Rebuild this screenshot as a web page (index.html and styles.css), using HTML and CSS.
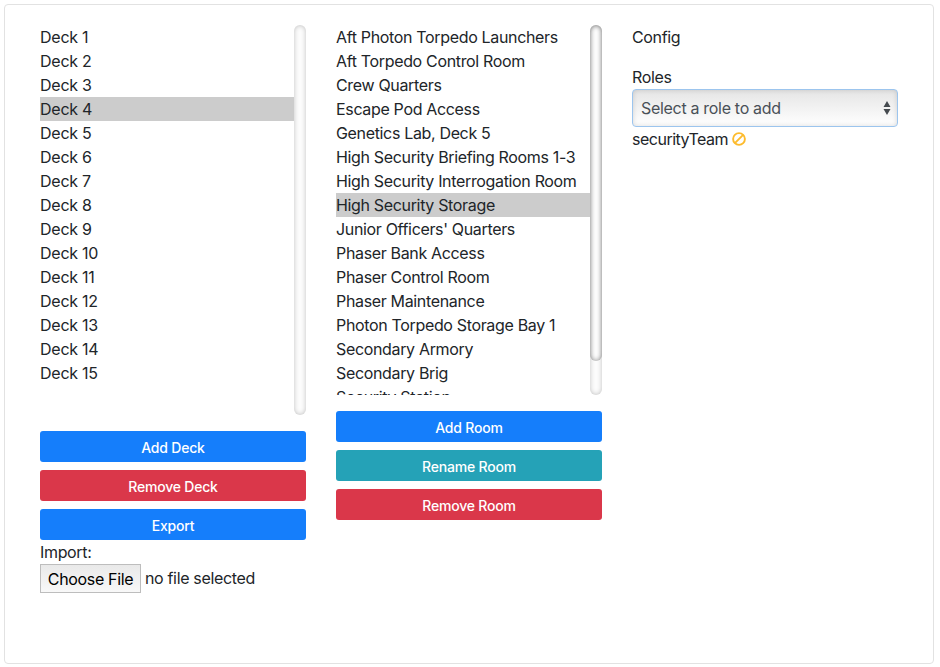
FILE: index.html
```html
<!DOCTYPE html>
<html lang="en">
<head>
<meta charset="utf-8">
<title>Decks and Rooms</title>
<link rel="stylesheet" href="styles.css">
</head>
<body>
<main class="card">
  <section class="column">
    <div class="scroller decks">
      <ul class="list">
        <li>Deck 1</li>
        <li>Deck 2</li>
        <li>Deck 3</li>
        <li class="selected">Deck 4</li>
        <li>Deck 5</li>
        <li>Deck 6</li>
        <li>Deck 7</li>
        <li>Deck 8</li>
        <li>Deck 9</li>
        <li>Deck 10</li>
        <li>Deck 11</li>
        <li>Deck 12</li>
        <li>Deck 13</li>
        <li>Deck 14</li>
        <li>Deck 15</li>
      </ul>
      <div class="track"></div>
    </div>
    <div class="buttons">
      <button class="btn primary">Add Deck</button>
      <button class="btn danger">Remove Deck</button>
      <button class="btn primary">Export</button>
    </div>
    <div class="import-label">Import:</div>
    <div class="file"><button class="choose">Choose File</button><span>no file selected</span></div>
  </section>

  <section class="column">
    <div class="scroller rooms">
      <ul class="list">
        <li>Aft Photon Torpedo Launchers</li>
        <li>Aft Torpedo Control Room</li>
        <li>Crew Quarters</li>
        <li>Escape Pod Access</li>
        <li>Genetics Lab, Deck 5</li>
        <li>High Security Briefing Rooms 1-3</li>
        <li>High Security Interrogation Room</li>
        <li class="selected">High Security Storage</li>
        <li>Junior Officers' Quarters</li>
        <li>Phaser Bank Access</li>
        <li>Phaser Control Room</li>
        <li>Phaser Maintenance</li>
        <li>Photon Torpedo Storage Bay 1</li>
        <li>Secondary Armory</li>
        <li>Secondary Brig</li>
        <li>Security Station</li>
      </ul>
      <div class="track"><div class="thumb"></div></div>
    </div>
    <div class="buttons">
      <button class="btn primary">Add Room</button>
      <button class="btn info">Rename Room</button>
      <button class="btn danger">Remove Room</button>
    </div>
  </section>

  <section class="column">
    <p class="heading">Config</p>
    <div>Roles</div>
    <div class="select">
      <span>Select a role to add</span>
      <svg class="arrows" width="8" height="14" viewBox="0 0 8 14"><path d="M4 0 7.5 6H.5zM4 14 .5 8h7z" fill="#454a4f"/></svg>
    </div>
    <div class="role"><span>securityTeam</span><svg width="14" height="14" viewBox="0 0 14 14" fill="none" stroke="#fdbb2d" stroke-width="1.9"><circle cx="7" cy="7" r="5.9"/><path d="M2.9 11.1 11.1 2.9"/></svg></div>
  </section>
</main>
</body>
</html>
```

FILE: styles.css
```css
* {
  box-sizing: border-box;
}

body {
  margin: 0;
  height: 667px;
  padding: 4px 6px 3px 4px;
  overflow: hidden;
  background: #fff;
  color: #212529;
  font: 16px/24px Inter, "Liberation Sans", sans-serif;
  letter-spacing: -0.34px;
}

.card {
  display: grid;
  grid-template-columns: repeat(3, 266px);
  column-gap: 30px;
  align-items: start;
  height: 660px;
  padding: 20px 35px;
  border: 1px solid #e2e2e2;
  border-radius: 4px;
}

.scroller {
  display: flex;
  overflow: hidden;
}

.decks {
  height: 390px;
}

.rooms {
  height: 370px;
}

.list {
  flex: 1;
  margin: 0;
  padding: 0;
  list-style: none;
  white-space: nowrap;
}

.selected {
  background: #ccc;
}

.decks .list {
  letter-spacing: -0.24px;
}

.track {
  width: 12px;
  border-radius: 6px;
  background: #fcfcfc;
  box-shadow: inset 0 0 5px rgba(0, 0, 0, 0.24);
}

.thumb {
  height: 336px;
  border-radius: 6px;
  box-shadow: inset 0 0 5px rgba(0, 0, 0, 0.4);
}

.buttons {
  display: flex;
  flex-direction: column;
  gap: 8px;
  margin-top: 16px;
}

.btn {
  height: 31px;
  padding: 2px 0 0;
  border: 0;
  border-radius: 3px;
  color: #fff;
  font: inherit;
  font-size: 14px;
  font-weight: 500;
  line-height: 29px;
  letter-spacing: -0.2px;
}

.primary {
  background: #157efb;
}

.danger {
  background: #da374a;
}

.info {
  background: #25a2b7;
}

.file {
  display: flex;
  align-items: center;
  gap: 4px;
}

.file span {
  line-height: 22px;
  padding-bottom: 1px;
}

.choose {
  width: 101px;
  height: 29px;
  padding: 0;
  border: 1px solid #bdbdbd;
  background: linear-gradient(#e9e9e9, #f8f8f8);
  color: #000;
  font: inherit;
  letter-spacing: inherit;
}

.heading {
  margin: 0 0 16px;
}

.select {
  display: flex;
  align-items: center;
  justify-content: space-between;
  height: 38px;
  padding: 0 6px 0 8px;
  border: 1px solid #9cc5ee;
  border-radius: 4px;
  background: linear-gradient(#e5e5e5, #fff);
  box-shadow: inset 0 0 5px rgba(0, 0, 0, 0.15);
  color: #495057;
  letter-spacing: -0.31px;
}

.role {
  display: flex;
  align-items: center;
  gap: 4px;
  letter-spacing: -0.5px;
}
```
